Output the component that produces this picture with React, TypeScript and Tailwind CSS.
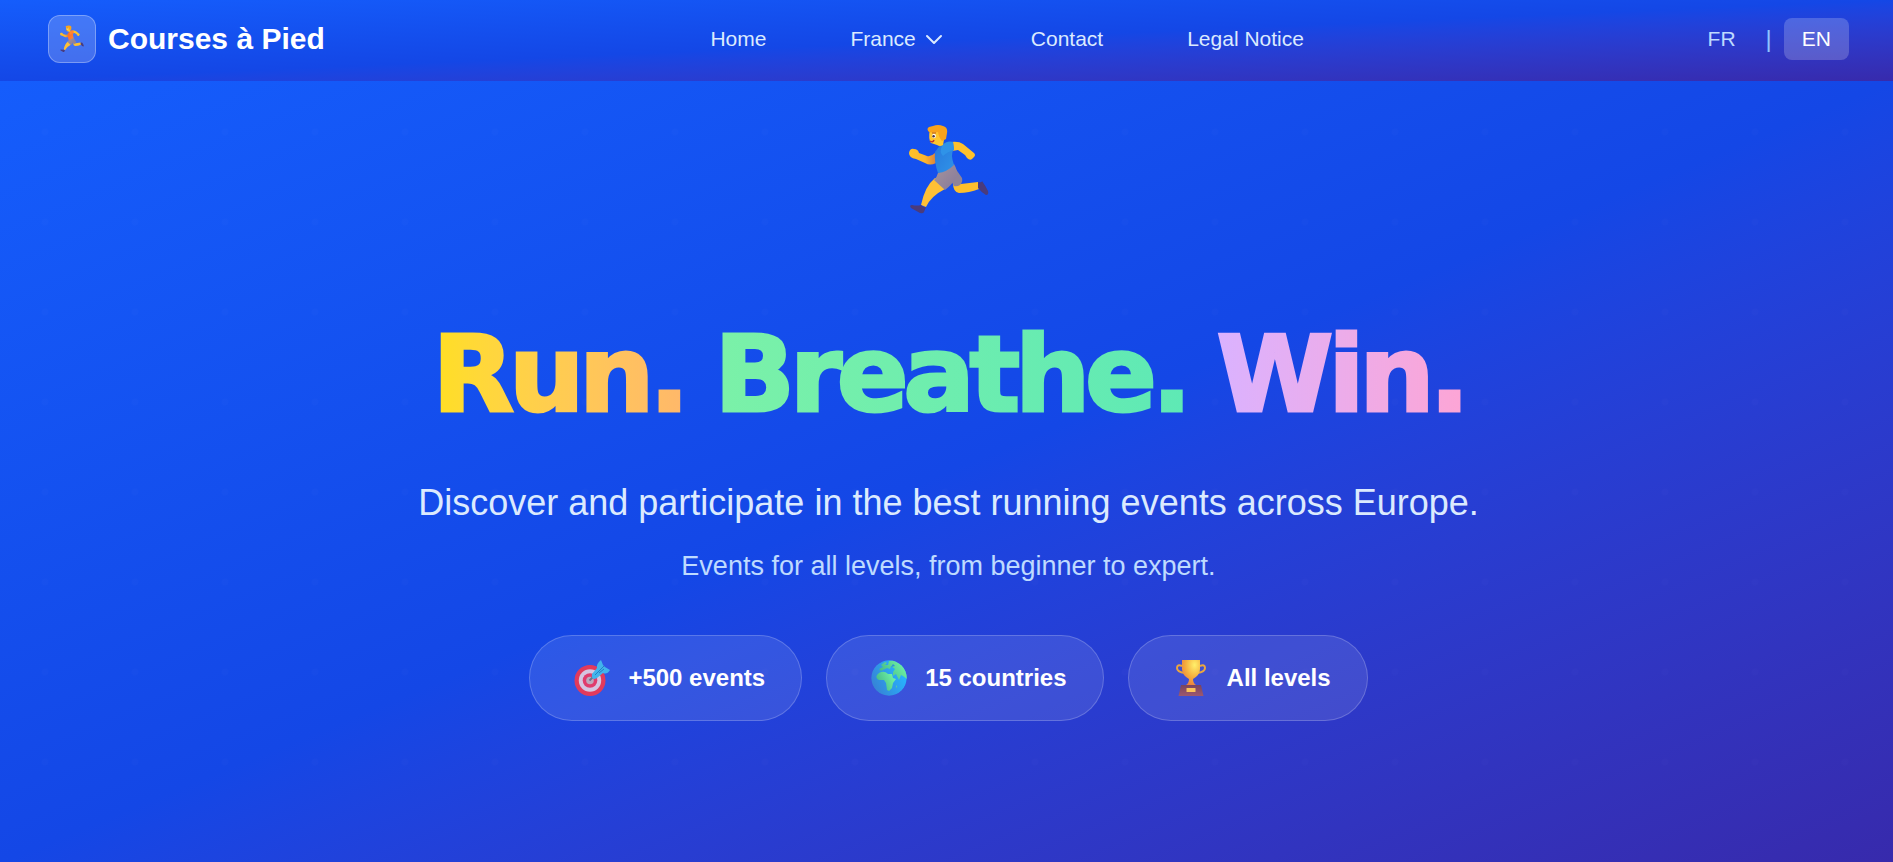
import React from "react";

type IconProps = { className?: string; shirt?: string; shirtDark?: string; id?: string };

function Runner({ className, shirt = "#2f93e8", shirtDark = "#2878dc", id = "r" }: IconProps) {
  return (
    <svg viewBox="0 0 80 90" className={className} aria-hidden="true">
      <defs>
        <linearGradient id={`${id}-shirt`} x1="0" y1="0" x2="1" y2="1">
          <stop offset="0" stopColor={shirtDark} />
          <stop offset="1" stopColor={shirt} />
        </linearGradient>
        <linearGradient id={`${id}-skin`} x1="0" y1="0" x2="1" y2="0">
          <stop offset="0" stopColor="#ffc226" />
          <stop offset="0.6" stopColor="#fdb52d" />
          <stop offset="1" stopColor="#d9803f" />
        </linearGradient>
        <linearGradient id={`${id}-shorts`} x1="0" y1="0" x2="1" y2="1">
          <stop offset="0" stopColor="#a8949a" />
          <stop offset="1" stopColor="#857a9c" />
        </linearGradient>
      </defs>
      <path d="M42 17 Q50 16 54 19 L65 28 Q67 30 65 32 L63 34 Q61 36 58 33 L56 30 L49 25 L43 26Z" fill="#ffc22b" />
      <path d="M27 38 Q21 41 16 38 L7 34 Q0 33 0 28 Q1 23 5 24 Q9 24 10 28 L18 31 Q22 32 26 28Z" fill={`url(#${id}-skin)`} />
      <path d="M44 58 Q44 67 50 68 Q60 68 70 64 L69 57 L52 59Z" fill="#fdbf2c" />
      <path d="M69 57 Q73 58 73 56 Q76 60 79 66 Q80 70 77 70 Q73 68 69 63Z" fill="#4a3b7c" />
      <path d="M36 56 L26 53 Q16 61 12 80 L17 82 Q22 71 36 64Z" fill="#ffc035" />
      <path d="M12 80 Q15 83 17 82 L15 87 Q14 89 11 88 L2 83 Q0 80 3 80 Q8 81 12 80Z" fill="#4a3b7c" />
      <path d="M44 40 L53 53 Q54 57 51 60 Q48 62 45 61 L40 52Z" fill="#8f8398" />
      <path d="M29 48 L45 39 Q49 46 48 51 Q43 60 36 65 L25 55Q28 52 29 48Z" fill={`url(#${id}-shorts)`} />
      <path d="M26 27 Q31 19 38 17 L44 17 L45 24 Q41 29 45 40 Q38 47 29 48 Q25 37 26 27Z" fill={`url(#${id}-shirt)`} />
      <path d="M33 21 Q38 15 44 17 L45 25 Q38 27 34 31 Q30 27 33 21Z" fill={shirt} />
      <path d="M21 4 L37 4 L34 20 Q31 22 28 20 L22 18 Q19 14 21 4Z" fill="#ffc62d" />
      <path d="M20 7 Q17 4 20 2 L24 1 Q29 -1 34 1 Q39 2 38 8 L37 14 L33 16 Q30 13 29 7 Q24 8 20 7Z" fill="#f9a31b" />
      <ellipse cx="25" cy="11" rx="1.8" ry="2.2" fill="#fff" />
      <circle cx="24.6" cy="11.2" r="1.2" fill="#493442" />
      <path d="M23 8 L27 8" fill="none" stroke="#b95628" strokeWidth="1" />
      <path d="M21 16 Q24 18 25 15" fill="none" stroke="#bf3430" strokeWidth="1.5" />
    </svg>
  );
}

function Target() {
  return (
    <svg viewBox="0 0 36 36" className="size-9" aria-hidden="true">
      <circle cx="16" cy="20.5" r="15.5" fill="#e23a5c" />
      <circle cx="16" cy="20.5" r="11.2" fill="#d5c5e1" />
      <circle cx="16" cy="20.5" r="7.3" fill="#e03c6d" />
      <circle cx="16" cy="20.5" r="3.8" fill="#bda9bd" />
      <path d="M15.5 20.5 L20 16" stroke="#68738d" strokeWidth="2" />
      <path d="M18 14 L23 8 Q22 4 27 0 L29 5 L31 7 L36 10 Q33 15 29 13 L23 18 Q17 21 18 14Z" fill="#41b4ec" />
      <path d="M21 15 L30 6 M25 13 L30 9" stroke="#257fc4" strokeWidth="1" />
    </svg>
  );
}

function Globe() {
  return (
    <svg viewBox="0 0 36 36" className="size-9" aria-hidden="true">
      <defs>
        <linearGradient id="sea" x1="0" y1="1" x2="1" y2="0.5">
          <stop offset="0" stopColor="#397ace" />
          <stop offset="1" stopColor="#27b4ff" />
        </linearGradient>
        <linearGradient id="land" x1="0" y1="0.5" x2="1" y2="0">
          <stop offset="0" stopColor="#45b988" />
          <stop offset="1" stopColor="#79ffab" />
        </linearGradient>
        <clipPath id="globe-clip"><circle cx="18" cy="18" r="17.7" /></clipPath>
      </defs>
      <g clipPath="url(#globe-clip)">
        <circle cx="18" cy="18" r="18" fill="url(#sea)" />
        <g fill="url(#land)">
          <path d="M10 5 L14 2 L16 3 L14 5 L17 5 L18 1 L26 0 L37 9 L36 19 L32 16 L30 15 L28 20 L25 14 L22 16 L22 12 L24 9 L20 6 L19 9 L16 8 L10 11 L8 9 L12 7Z" />
          <path d="M8 13 Q13 10 17 14 L21 14 L22 18 L25 19 L22 23 L21 28 L18 31 L16 30 L15 23 L13 20 L8 20 Q4 18 6 15Z" />
          <path d="M25 25 L26 27 L25 28Z" />
        </g>
        <path d="M22 4 L20 7 L24 6Z" fill="#2c92d4" />
      </g>
    </svg>
  );
}

function Trophy() {
  return (
    <svg viewBox="0 0 36 36" className="size-9" aria-hidden="true">
      <defs>
        <radialGradient id="cup" cx="0.7" cy="0.2" r="0.9">
          <stop offset="0" stopColor="#fff06b" />
          <stop offset="0.55" stopColor="#f5ae3e" />
          <stop offset="1" stopColor="#e87940" />
        </radialGradient>
        <linearGradient id="base" x1="0" y1="0" x2="0" y2="1">
          <stop offset="0" stopColor="#79445e" />
          <stop offset="1" stopColor="#9d5870" />
        </linearGradient>
      </defs>
      <path d="M9 6 Q4 4 4 8 Q4 12 12 13 M27 6 Q32 4 32 8 Q32 12 24 13" fill="none" stroke="#eaa63f" strokeWidth="2" />
      <path d="M9 0 H27 V9 Q27 15 20 19 Q20 23 23 25 H13 Q16 23 16 19 Q9 15 9 9Z" fill="url(#cup)" />
      <path d="M8 25 H28 L30.5 36 H5.5Z" fill="url(#base)" />
      <rect x="13.5" y="28" width="9" height="4" rx="0.5" fill="#fbc35a" />
    </svg>
  );
}

const stats = [
  { icon: <Target />, label: "+500 events" },
  { icon: <Globe />, label: "15 countries" },
  { icon: <Trophy />, label: "All levels" },
];

export default function App() {
  return (
    <div className="flex min-h-screen flex-col font-['Liberation_Sans',Arial,sans-serif]">
      <header className="bg-linear-to-br from-[#155dfc] via-[#1447e6] to-[#372aac] pt-[15px] pb-[18px] pr-11 pl-12">
        <div className="flex items-center justify-between">
          <a href="#home" className="flex items-center gap-3 text-white">
            <span className="flex size-12 items-center justify-center rounded-xl border border-white/30 bg-white/20">
              <Runner id="logo" className="h-7 w-6" shirt="#ff8635" shirtDark="#fb642c" />
            </span>
            <span className="text-[30px] leading-9 font-bold">Courses à Pied</span>
          </a>
          <nav aria-label="Main" className="flex items-center gap-[84px] text-[21px] leading-7 text-blue-100">
            <a href="#home" className="hover:text-white">Home</a>
            <button type="button" className="flex items-center gap-2 pr-[3px] hover:text-white">
              France
              <svg viewBox="0 0 20 20" className="size-5" fill="none" stroke="currentColor" strokeWidth="2" strokeLinecap="round" strokeLinejoin="round" aria-hidden="true">
                <path d="M3 7 L10 14 L17 7" />
              </svg>
            </button>
            <a href="#contact" className="hover:text-white">Contact</a>
            <a href="#legal" className="hover:text-white">Legal Notice</a>
          </nav>
          <div className="flex items-center justify-end text-[21px] leading-7">
            <button type="button" className="px-[18px] py-[7px] text-blue-200">FR</button>
            <span className="mx-3 text-2xl leading-7 text-blue-300" aria-hidden="true">|</span>
            <button type="button" aria-pressed="true" className="rounded-lg bg-white/20 px-[18px] py-[7px] text-white">EN</button>
          </div>
        </div>
      </header>

      <main className="grow bg-linear-to-br from-[#155dfc] via-[#1447e6] to-[#372aac]">
        <div className="flex h-full flex-col items-center bg-[radial-gradient(circle_at_45px_51px,rgba(255,255,255,0.012)_3px,transparent_4px)] bg-size-[90px_90px] pt-11 pr-6 pb-[120px] pl-7 text-center">
          <Runner id="hero" className="h-[90px] w-20" />
          <h1 className="mt-[106px] flex flex-wrap justify-center gap-x-[30px] font-['DejaVu_Sans','Arial_Black',sans-serif] text-[106px] leading-[108px] font-black tracking-tighter [-webkit-text-stroke:3px_transparent]">
            <span className="bg-linear-to-r from-[#ffdf20] to-[#ffb86a] bg-clip-text text-transparent">Run.</span>
            <span className="bg-linear-to-r from-[#7bf1a8] to-[#5ee9b5] bg-clip-text text-transparent">Breathe.</span>
            <span className="bg-linear-to-r from-[#dab2ff] to-[#fda5d5] bg-clip-text text-transparent">Win.</span>
          </h1>
          <p className="mt-[45px] text-4xl leading-[58px] text-blue-100">
            Discover and participate in the best running events across Europe.
          </p>
          <p className="mt-4 text-[27px] leading-9 text-blue-200">Events for all levels, from beginner to expert.</p>
          <ul className="mt-[51px] flex flex-wrap justify-center gap-6">
            {stats.map(({ icon, label }) => (
              <li key={label} className="flex items-center gap-[18px] rounded-full border border-white/20 bg-white/10 py-6 pr-9 pl-11 text-white">
                {icon}
                <span className="text-2xl leading-9 font-bold">{label}</span>
              </li>
            ))}
          </ul>
        </div>
      </main>
    </div>
  );
}
